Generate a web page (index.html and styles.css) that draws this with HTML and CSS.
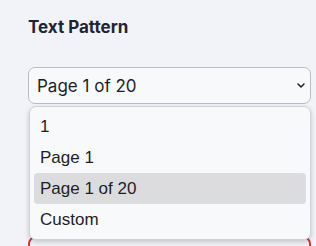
FILE: index.html
```html
<!DOCTYPE html>
<html lang="en">
<head>
    <meta charset="UTF-8">
    <meta name="viewport" content="width=device-width, initial-scale=1.0">
    <title>Text Pattern</title>
    <link rel="stylesheet" href="styles.css">
</head>
<body>
    <div class="panel">
        <h2 class="label">Text Pattern</h2>

        <div class="select-wrap">
            <div class="select">
                <span>Page 1 of 20</span>
                <svg class="chevron" width="8" height="5" viewBox="0 0 8 5">
                    <path d="M1 1 L4 4 L7 1" fill="none" stroke="#222" stroke-width="1.5" stroke-linecap="round" stroke-linejoin="round"/>
                </svg>
            </div>

            <ul class="options">
                <li>1</li>
                <li>Page 1</li>
                <li class="active">Page 1 of 20</li>
                <li>Custom</li>
            </ul>

            <div class="under"></div>
        </div>
    </div>
</body>
</html>
```

FILE: styles.css
```css
body {
    margin: 0;
    background: #f1f3f8;
    font-family: Inter, sans-serif;
}

.panel {
    height: 246px;
    overflow: hidden;
    box-sizing: border-box;
    padding: 17px 5px 0 28px;
}

.label {
    margin: 0;
    font-size: 17px;
    font-weight: 700;
    color: #1f2433;
    line-height: 21px;
}

.select-wrap {
    position: relative;
    margin-top: 29px;
}

.select {
    height: 37px;
    box-sizing: border-box;
    border: 1px solid #b9bcc4;
    border-radius: 7px;
    background: #f8f9fb;
    display: flex;
    align-items: center;
    justify-content: space-between;
    padding: 0 5px 0 8px;
    font-size: 17px;
    color: #1c1f2a;
}

.options {
    position: absolute;
    top: 39px;
    left: 1px;
    right: 0;
    margin: 0;
    padding: 4px 4px;
    list-style: none;
    background: #f8f9fb;
    border: 1px solid #d0d2d8;
    border-radius: 7px;
    box-shadow: 0 2px 5px rgba(0,0,0,0.2);
    z-index: 2;
    font-family: "Liberation Sans", Arial, sans-serif;
    font-size: 17px;
    color: #1e1e1e;
}

.options li {
    height: 31px;
    line-height: 31px;
    padding: 0 6px;
    border-radius: 4px;
}

.options li.active {
    background: #dcdcde;
}

.under {
    margin-top: 132px;
    height: 40px;
    border: 2px solid #d9343a;
    border-radius: 8px;
    background: #f3f4f7;
}
```
